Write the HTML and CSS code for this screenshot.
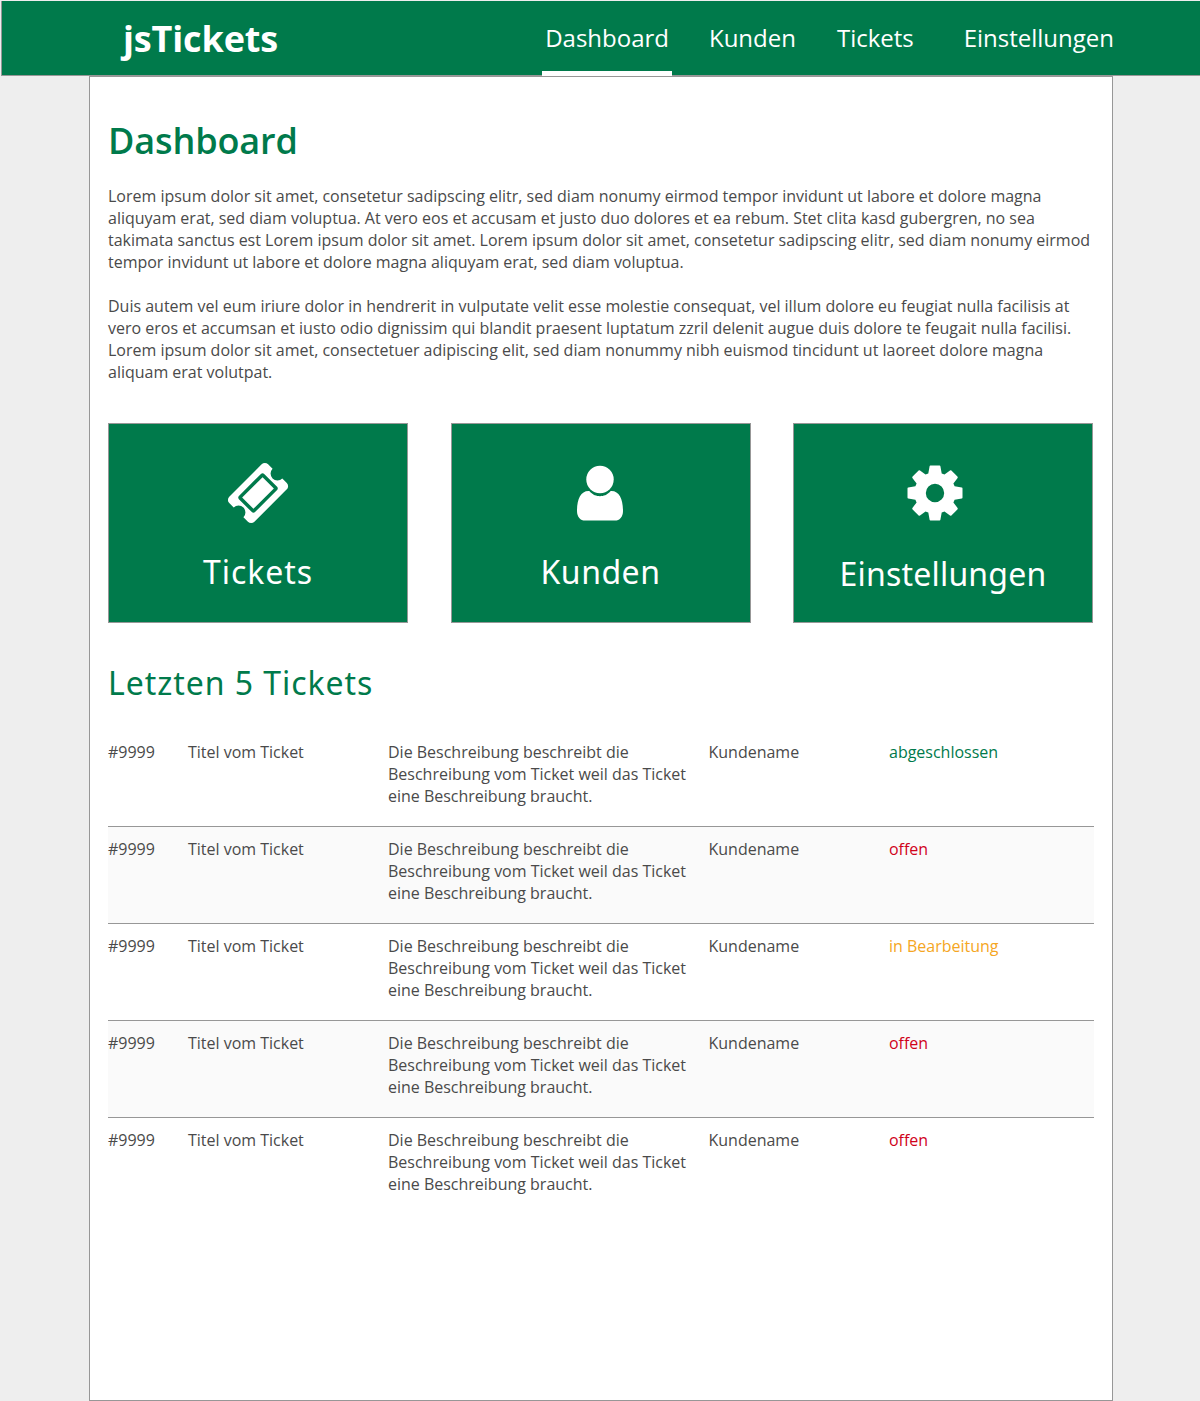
FILE: index.html
```html
<!DOCTYPE html>
<html lang="de">
<head>
<meta charset="utf-8">
<title>jsTickets</title>
<link rel="stylesheet" href="styles.css">
</head>
<body>
<header class="topbar">
  <div class="brand">jsTickets</div>
  <nav class="nav">
    <a class="nav-item active">Dashboard</a>
    <a class="nav-item">Kunden</a>
    <a class="nav-item">Tickets</a>
    <a class="nav-item last">Einstellungen</a>
  </nav>
</header>
<main class="page">
  <h1 class="title">Dashboard</h1>
  <p class="text">Lorem ipsum dolor sit amet, consetetur sadipscing elitr, sed diam nonumy eirmod tempor invidunt ut labore et dolore magna<br>aliquyam erat, sed diam voluptua. At vero eos et accusam et justo duo dolores et ea rebum. Stet clita kasd gubergren, no sea<br>takimata sanctus est Lorem ipsum dolor sit amet. Lorem ipsum dolor sit amet, consetetur sadipscing elitr, sed diam nonumy eirmod<br>tempor invidunt ut labore et dolore magna aliquyam erat, sed diam voluptua.</p>
  <p class="text">Duis autem vel eum iriure dolor in hendrerit in vulputate velit esse molestie consequat, vel illum dolore eu feugiat nulla facilisis at<br>vero eros et accumsan et iusto odio dignissim qui blandit praesent luptatum zzril delenit augue duis dolore te feugait nulla facilisi.<br>Lorem ipsum dolor sit amet, consectetuer adipiscing elit, sed diam nonummy nibh euismod tincidunt ut laoreet dolore magna<br>aliquam erat volutpat.</p>
  <section class="tiles">
    <a class="tile">
      <svg class="icon" viewBox="0 0 1792 1792"><path d="M1024 452l316 316-572 572-316-316zm-211 979l618-618q19-19 19-45t-19-45l-362-362q-18-18-45-18t-45 18l-618 618q-19 19-19 45t19 45l362 362q18 18 45 18t45-18zm889-637l-907 908q-37 37-90.5 37t-90.5-37l-126-125q56-56 56-136t-56-136-136-56-136 56l-125-126q-37-37-37-90.5t37-90.5l907-906q37-37 90.5-37t90.5 37l125 125q-56 56-56 136t56 136 136 56 136-56l126 125q37 37 37 90.5t-37 90.5z"/></svg>
      <span class="label tickets-label">Tickets</span>
    </a>
    <a class="tile customers">
      <svg class="icon" viewBox="0 0 64 64"><circle cx="32" cy="18.500" r="13.700"/><path d="M21.300 30.100C25 34.400 28.500 35.200 32 35.200S39 34.400 42.700 30.100C51 29.500 55 38 55 50C55 56 51.500 59.600 47 59.600H17C12.500 59.600 9 56 9 50C9 38 13 29.500 21.300 30.100Z"/></svg>
      <span class="label kunden-label">Kunden</span>
    </a>
    <a class="tile settings">
      <svg class="icon" viewBox="-32 -32 64 64"><path fill-rule="evenodd" d="M-4.600-27.500H4.600Q5.300-27.500 5.400-26.800L6.700-19.600L9.500-18.400L15-22.600Q15.700-23 16.400-22.400L22.400-16.400Q23-15.700 22.600-15L18.400-9.500L19.600-6.700L26.800-5.600Q27.500-5.400 27.500-4.600V4.600Q27.500 5.400 26.800 5.600L19.600 6.700L18.400 9.500L22.600 15Q23 15.700 22.400 16.400L16.400 22.400Q15.700 23 15 22.600L9.500 18.400L6.700 19.600L5.400 26.800Q5.300 27.500 4.600 27.500H-4.600Q-5.300 27.500-5.400 26.800L-6.700 19.600L-9.500 18.400L-15 22.600Q-15.700 23-16.400 22.400L-22.400 16.400Q-23 15.700-22.600 15L-18.400 9.500L-19.600 6.700L-26.800 5.600Q-27.500 5.400-27.500 4.600V-4.600Q-27.500-5.400-26.800-5.600L-19.600-6.700L-18.400-9.500L-22.600-15Q-23-15.700-22.400-16.400L-16.400-22.400Q-15.700-23-15-22.600L-9.500-18.400L-6.700-19.600L-5.400-26.800Q-5.300-27.500-4.600-27.500ZM9.200 0A9.200 9.200 0 1 0-9.200 0A9.200 9.200 0 1 0 9.200 0Z"/></svg>
      <span class="label settings-label">Einstellungen</span>
    </a>
  </section>
  <h2 class="subtitle">Letzten 5 Tickets</h2>
  <section class="tickets">
    <div class="row"><span>#9999</span><span>Titel vom Ticket</span><span>Die Beschreibung beschreibt die<br>Beschreibung vom Ticket weil das Ticket<br>eine Beschreibung braucht.</span><span>Kundename</span><span class="done">abgeschlossen</span></div>
    <div class="row"><span>#9999</span><span>Titel vom Ticket</span><span>Die Beschreibung beschreibt die<br>Beschreibung vom Ticket weil das Ticket<br>eine Beschreibung braucht.</span><span>Kundename</span><span class="open">offen</span></div>
    <div class="row"><span>#9999</span><span>Titel vom Ticket</span><span>Die Beschreibung beschreibt die<br>Beschreibung vom Ticket weil das Ticket<br>eine Beschreibung braucht.</span><span>Kundename</span><span class="progress">in Bearbeitung</span></div>
    <div class="row"><span>#9999</span><span>Titel vom Ticket</span><span>Die Beschreibung beschreibt die<br>Beschreibung vom Ticket weil das Ticket<br>eine Beschreibung braucht.</span><span>Kundename</span><span class="open">offen</span></div>
    <div class="row"><span>#9999</span><span>Titel vom Ticket</span><span>Die Beschreibung beschreibt die<br>Beschreibung vom Ticket weil das Ticket<br>eine Beschreibung braucht.</span><span>Kundename</span><span class="open">offen</span></div>
  </section>
</main>
</body>
</html>
```
FILE: styles.css
```css
* { box-sizing: border-box; }
body {
  margin: 0;
  padding: 1px 0 0 1px;
  background: #eee;
  color: #4a4a4a;
  font: 16px/22px "Open Sans", sans-serif;
  letter-spacing: -0.008px;
  overflow: hidden;
}
.topbar {
  height: 75px;
  border: 1px solid #979797;
  border-width: 0 0 1px 1px;
  background: #007a4b;
  color: #fff;
  display: flex;
  justify-content: space-between;
  padding: 0 83px 0 121px;
}
.brand {
  font-size: 36px;
  font-weight: 700;
  line-height: 76px;
  letter-spacing: -0.15px;
}
.nav { display: flex; }
.nav-item {
  height: 75px;
  padding: 0 3px;
  margin-right: 35px;
  font-size: 24px;
  line-height: 73px;
  white-space: nowrap;
}
.nav-item.active {
  border-bottom: 5px solid #fff;
  margin-right: 34px;
}
.nav-item.last { margin: 0 0 0 9px; }
.page {
  width: 1024px;
  height: 1325px;
  margin-left: 88px;
  padding: 39px 18px 0;
  border: 1px solid #979797;
  background: #fff;
}
.title {
  margin: 0 0 20px;
  font-size: 36px;
  font-weight: 600;
  line-height: 49px;
  letter-spacing: -0.12px;
  color: #007a4b;
}
.text {
  margin: 0 0 22px;
  white-space: nowrap;
}
.tiles {
  display: flex;
  justify-content: space-between;
  width: 985px;
  margin-top: 40px;
}
.tile {
  width: 300px;
  height: 200px;
  padding-top: 37px;
  border: 1px solid #979797;
  background: #007a4b;
  color: #fff;
  display: flex;
  flex-direction: column;
  align-items: center;
}
.icon {
  width: 64px;
  height: 64px;
  fill: #fff;
}
.customers .icon { margin-right: 1px; }
.settings .icon { margin-right: 16px; }
.label, .subtitle {
  font-family: "Noto Sans", sans-serif;
  font-size: 32px;
  font-weight: 400;
  line-height: 44px;
  letter-spacing: 0.95px;
}
.label { margin-top: 25px; }
.kunden-label { letter-spacing: 0.5px; }
.settings-label {
  margin-top: 27px;
  letter-spacing: 0.2px;
}
.subtitle {
  margin: 38px 0 25px;
  color: #007a4b;
}
.tickets { width: 986px; }
.row {
  display: grid;
  grid-template-columns: 80px 200px 320.5px 180.5px 1fr;
  height: 97px;
  padding-top: 11px;
  border-bottom: 1px solid #979797;
  white-space: nowrap;
}
.row:nth-child(even) { background: #fafafa; }
.row:last-child { border-bottom: 0; }
.done { color: #007a4b; }
.open { color: #d0021b; }
.progress { color: #f5a623; }
```
